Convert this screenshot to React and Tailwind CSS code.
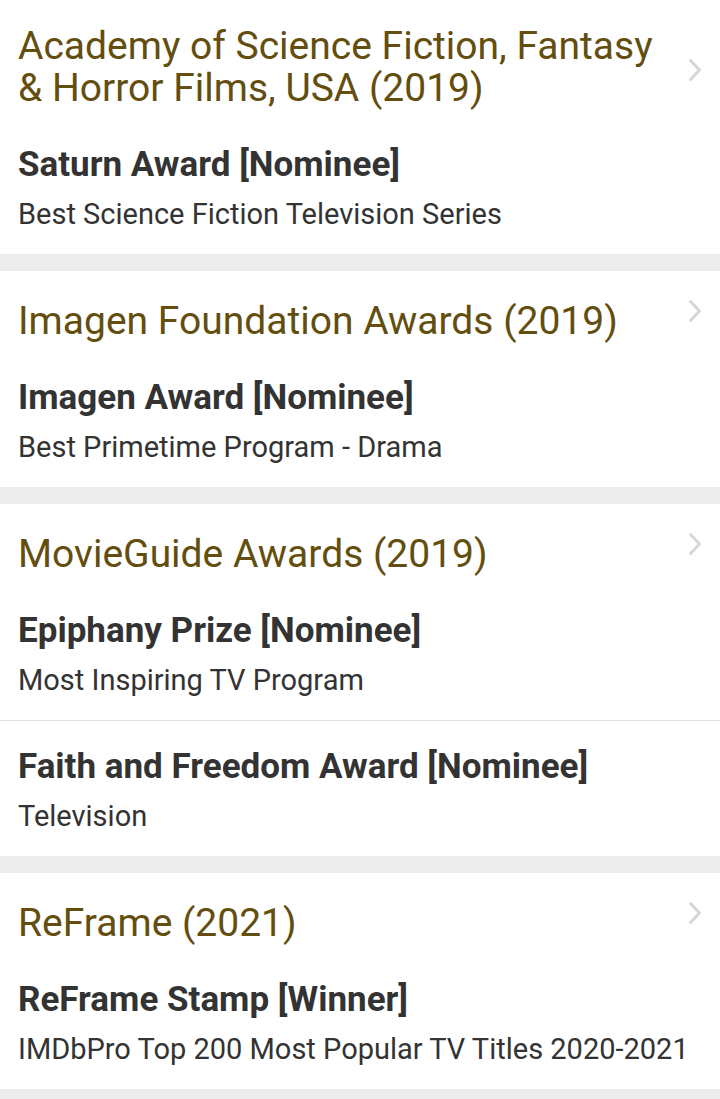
import React from "react";

const sections = [
  {
    title: "Academy of Science Fiction, Fantasy & Horror Films, USA (2019)",
    top: "pt-[25px]",
    chevron: "mt-[33px]",
    awards: [
      { name: "Saturn Award [Nominee]", category: "Best Science Fiction Television Series" },
    ],
  },
  {
    title: "Imagen Foundation Awards (2019)",
    top: "pt-[29px]",
    chevron: "-mt-px",
    awards: [{ name: "Imagen Award [Nominee]", category: "Best Primetime Program - Drama" }],
  },
  {
    title: "MovieGuide Awards (2019)",
    top: "pt-[29px]",
    chevron: "-mt-px",
    awards: [
      { name: "Epiphany Prize [Nominee]", category: "Most Inspiring TV Program" },
      { name: "Faith and Freedom Award [Nominee]", category: "Television" },
    ],
  },
  {
    title: "ReFrame (2021)",
    top: "pt-[29px]",
    chevron: "-mt-px",
    awards: [
      { name: "ReFrame Stamp [Winner]", category: "IMDbPro Top 200 Most Popular TV Titles 2020-2021" },
    ],
  },
];

const Chevron = ({ className }) => (
  <svg
    width="14"
    height="24"
    viewBox="0 0 14 24"
    fill="none"
    className={className}
  >
    <path d="M2.5 2.5 L11.5 12 L2.5 21.5" stroke="#d6d6d6" strokeWidth="3" strokeLinecap="round" strokeLinejoin="round" />
  </svg>
);

const Section = ({ section }) => (
  <div className={`bg-white ${section.top}`}>
    <div className="flex justify-between items-start pl-[18px] pr-[18px] pb-[8px]">
      <div className="text-[39px] leading-[42px] text-[#634e0f] pr-[12px]">
        {section.title}
      </div>
      <Chevron className={`shrink-0 ${section.chevron}`} />
    </div>
    {section.awards.map((a, i) => (
      <div
        key={a.name}
        className={`px-[18px] pb-[22px] ${i > 0 ? "pt-[26px] border-t border-[#dedede]" : "pt-[28px]"}`}
      >
        <div className="text-[35px] leading-[40px] font-bold text-[#333333]">{a.name}</div>
        <div className="mt-[11px] text-[29px] leading-[36px] text-[#333333] whitespace-nowrap">
          {a.category}
        </div>
      </div>
    ))}
  </div>
);

export default function App() {
  return (
    <div
      className="w-[720px] h-[1099px] overflow-hidden bg-[#ececec] flex flex-col gap-[17px]"
      style={{ fontFamily: "Roboto, 'Noto Sans', sans-serif" }}
    >
      {sections.map((s) => (
        <Section key={s.title} section={s} />
      ))}
    </div>
  );
}
